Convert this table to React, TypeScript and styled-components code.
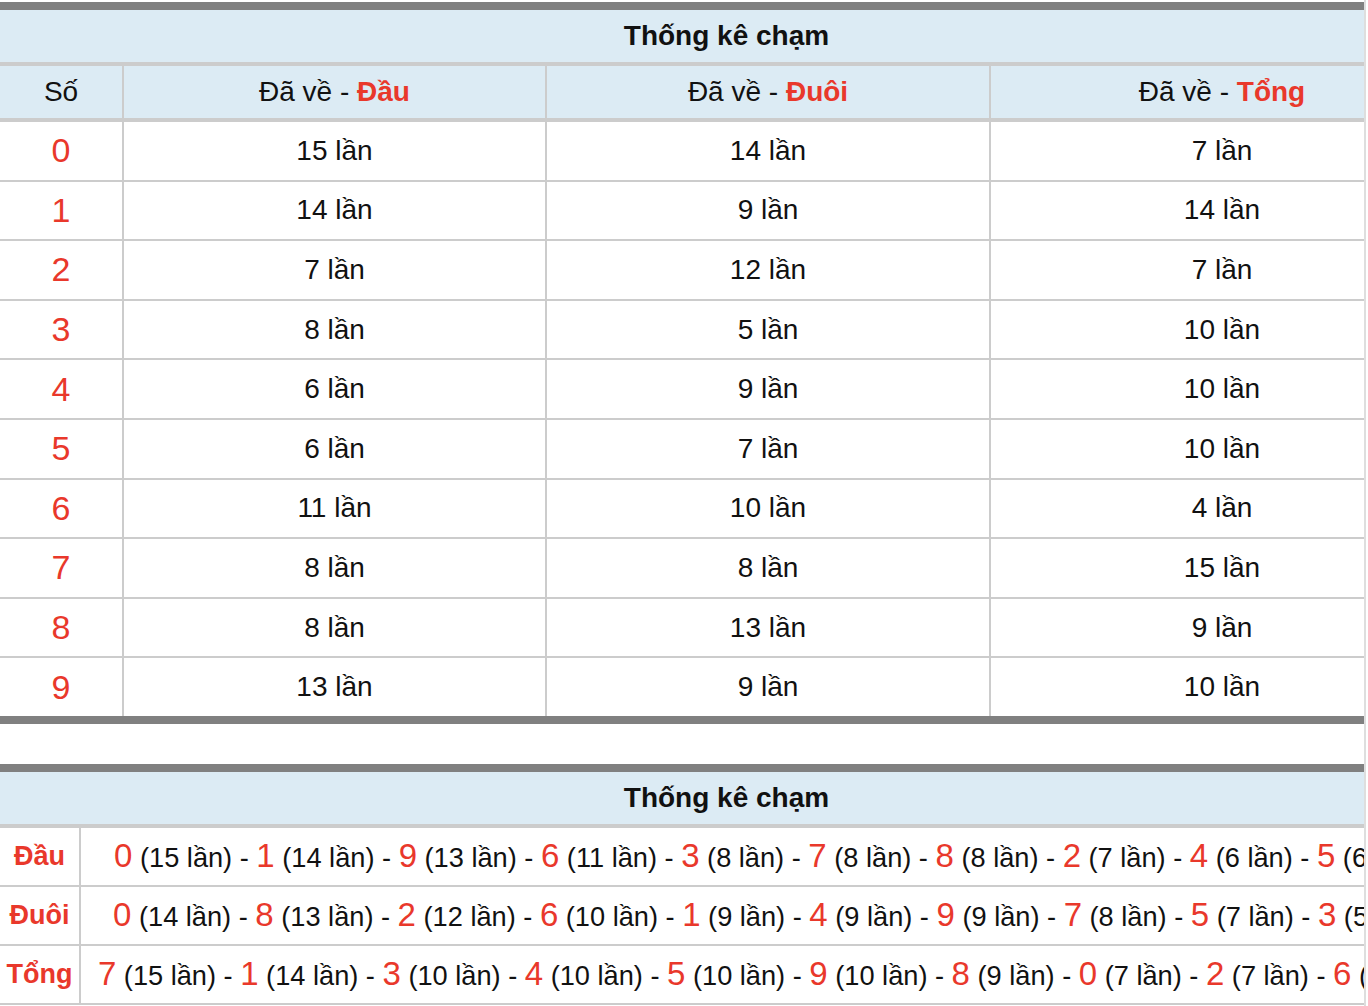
import React from "react";
import styled, { createGlobalStyle } from "styled-components";

const dau = [15, 14, 7, 8, 6, 6, 11, 8, 8, 13];
const duoi = [14, 9, 12, 5, 9, 7, 10, 8, 13, 9];
const tong = [7, 14, 7, 10, 10, 10, 4, 15, 9, 10];

const ranked = (counts: number[]) =>
  counts
    .map((count, digit) => ({ digit, count }))
    .sort((a, b) => b.count - a.count || a.digit - b.digit);

const summary = [
  { label: "Đầu", counts: dau },
  { label: "Đuôi", counts: duoi },
  { label: "Tổng", counts: tong },
];

const App: React.FC = () => {
  return (
    <>
      <GlobalStyle />
      <Viewport>
        <StatTable>
          <colgroup>
            <Col $width="124px" />
            <Col $width="423px" />
            <Col $width="444px" />
            <Col />
          </colgroup>
          <thead>
            <tr>
              <TitleCell colSpan={4}>Thống kê chạm</TitleCell>
            </tr>
            <tr>
              <HeadCell>Số</HeadCell>
              <HeadCell>
                Đã về - <Accent>Đầu</Accent>
              </HeadCell>
              <HeadCell>
                Đã về - <Accent>Đuôi</Accent>
              </HeadCell>
              <HeadCell>
                Đã về - <Accent>Tổng</Accent>
              </HeadCell>
            </tr>
          </thead>
          <tbody>
            {dau.map((_, n) => (
              <tr key={n}>
                <Cell>
                  <Digit>{n}</Digit>
                </Cell>
                <Cell>{dau[n]} lần</Cell>
                <Cell>{duoi[n]} lần</Cell>
                <Cell>{tong[n]} lần</Cell>
              </tr>
            ))}
          </tbody>
        </StatTable>

        <SummaryTable>
          <colgroup>
            <Col $width="81px" />
            <Col />
          </colgroup>
          <thead>
            <tr>
              <TitleCell colSpan={2}>Thống kê chạm</TitleCell>
            </tr>
          </thead>
          <tbody>
            {summary.map((row) => (
              <tr key={row.label}>
                <RowLabel>{row.label}</RowLabel>
                <Sequence>
                  {ranked(row.counts).map((item, i) => (
                    <React.Fragment key={item.digit}>
                      {i > 0 && " - "}
                      <Digit $small>{item.digit}</Digit> ({item.count} lần)
                    </React.Fragment>
                  ))}
                </Sequence>
              </tr>
            ))}
          </tbody>
        </SummaryTable>
      </Viewport>
    </>
  );
};

export default App;

// Styled Components
const GlobalStyle = createGlobalStyle`
  html, body {
    margin: 0;
    padding: 0;
    background: #fff;
  }
  body {
    font-family: "Liberation Sans", Arial, Helvetica, sans-serif;
    color: #111;
  }
`;

const Viewport = styled.div`
  width: 1366px;
  height: 1006px;
  box-sizing: border-box;
  padding-top: 2px;
  overflow: hidden;
  border-right: 2px solid #dedede;
`;

const StatTable = styled.table`
  width: 1453px;
  table-layout: fixed;
  border-collapse: separate;
  border-spacing: 0;
  border-top: 8px solid #808080;
  border-bottom: 8px solid #808080;
`;

const SummaryTable = styled(StatTable)`
  margin-top: 40px;
  border-bottom: none;
`;

const Col = styled.col<{ $width?: string }>`
  width: ${(p) => p.$width || "auto"};
`;

const TitleCell = styled.th`
  height: 52px;
  padding: 0;
  background: #dcebf4;
  border-bottom: 4px solid #cccccc;
  font-size: 28px;
  font-weight: bold;
  text-align: center;
  color: #111;
`;

const HeadCell = styled.th`
  height: 52px;
  padding: 0;
  background: #dcebf4;
  border-bottom: 4px solid #cccccc;
  border-right: 2px solid #cccccc;
  font-size: 28px;
  font-weight: normal;
  text-align: center;
  color: #111;

  &:last-child {
    border-right: none;
  }
`;

const Cell = styled.td`
  height: 57.6px;
  padding: 0;
  border-right: 2px solid #cccccc;
  border-bottom: 2px solid #cccccc;
  font-size: 28px;
  text-align: center;
  vertical-align: middle;

  &:last-child {
    border-right: none;
  }
  tr:last-child > & {
    border-bottom: none;
  }
`;

const Digit = styled.span<{ $small?: boolean }>`
  color: #e9382b;
  font-size: ${(p) => (p.$small ? "33px" : "34px")};
`;

const Accent = styled.b`
  color: #e9382b;
`;

const RowLabel = styled.th`
  height: 57px;
  padding: 0;
  border-right: 2px solid #cccccc;
  border-bottom: 2px solid #cccccc;
  font-size: 27px;
  font-weight: bold;
  color: #e9382b;
  text-align: center;
`;

const Sequence = styled.td`
  height: 57px;
  padding: 0 16px;
  border-bottom: 2px solid #cccccc;
  font-size: 27.2px;
  white-space: nowrap;
  text-align: center;
  vertical-align: middle;
`;
